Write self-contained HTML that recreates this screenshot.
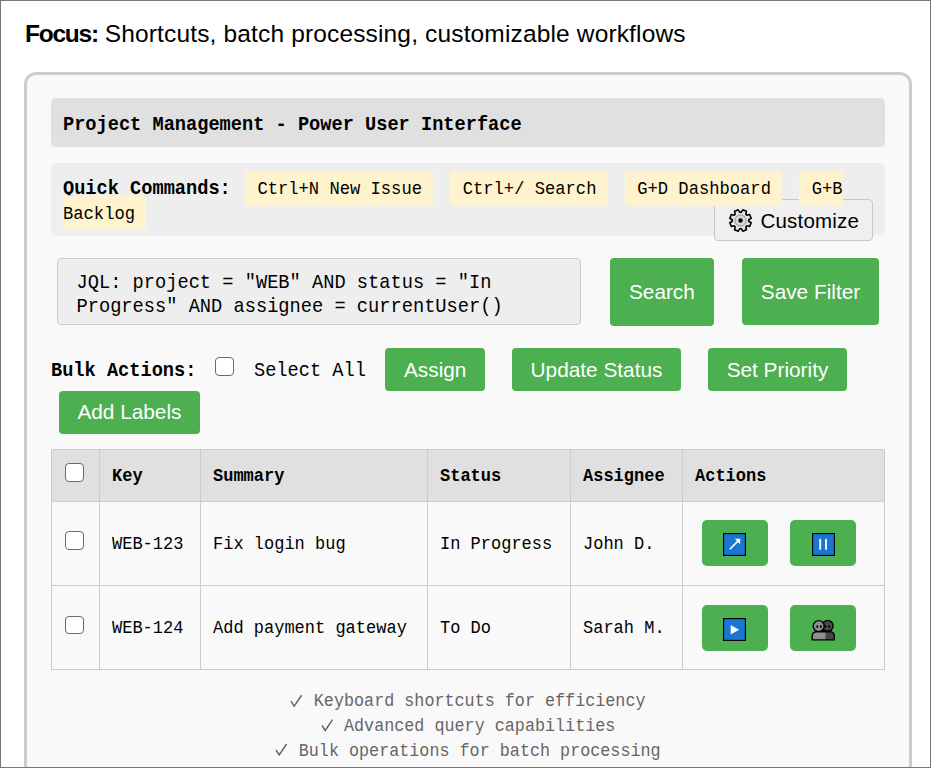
<!DOCTYPE html>
<html><head><meta charset="utf-8">
<style>
*{box-sizing:border-box;}
html,body{margin:0;padding:0;}
body{width:931px;height:768px;overflow:hidden;position:relative;background:#fff;font-family:"Liberation Sans",sans-serif;color:#000;}
.a{position:absolute;white-space:nowrap;}
.frame{position:absolute;left:0;top:0;width:931px;height:768px;border:1px solid #777;z-index:50;}
.h{left:25px;top:17.5px;font-size:24.5px;line-height:32px;letter-spacing:0.15px;}
.h b{letter-spacing:-1.25px;}
.box{position:absolute;left:24px;top:72px;width:888px;height:800px;border:3px solid #ccc;border-radius:12px;background:#f9f9f9;}
.mono{font-family:"Liberation Mono",monospace;}
.title{position:absolute;left:51px;top:98px;width:834px;height:48.6px;background:#e0e0e0;border-radius:5px;}
.tt{left:63px;top:112.5px;font-family:"Liberation Mono",monospace;font-weight:bold;font-size:18.65px;line-height:24px;transform:scaleY(1.06);transform-origin:0 12px;}
.qc{position:absolute;left:51px;top:162.8px;width:834px;height:73px;background:#eee;border-radius:5px;}
.qtx{left:63px;top:177.8px;width:810px;white-space:normal;font-family:"Liberation Mono",monospace;font-size:18.65px;line-height:22.64px;transform:scaleY(1.06);transform-origin:0 11.3px;}
.kbd{background:#fff3cd;padding:8.2px 11.4px 5.6px 12.6px;margin:0 2.8px;font-size:17.15px;border-radius:3px;}
.cust{position:absolute;left:713.5px;top:199.3px;width:159px;height:41.5px;border:1px solid #c8c8c8;border-radius:4px;background:#efefef;font-family:"Liberation Sans",sans-serif;font-size:20.5px;letter-spacing:0.2px;}
.cust span{position:absolute;left:46px;top:9px;line-height:23px;}
.cust svg{position:absolute;left:14px;top:8.5px;}
.jql{position:absolute;left:57.3px;top:258.2px;width:524.2px;height:67.3px;background:#eee;border:1px solid #ccc;border-radius:4px;}
.jt{left:76.5px;top:272px;font-family:"Liberation Mono",monospace;font-size:18.7px;line-height:21.98px;transform:scaleY(1.06);transform-origin:0 11px;}
.btn{position:absolute;background:#4caf50;color:#fff;border-radius:4px;font-family:"Liberation Sans",sans-serif;font-size:20.8px;padding-top:0px;text-align:center;white-space:nowrap;}
.bt{left:51px;top:358.5px;font-family:"Liberation Mono",monospace;font-size:18.65px;line-height:24px;transform:scaleY(1.06);transform-origin:0 12px;}
.cb{position:absolute;width:18.5px;height:18.5px;border:1.6px solid #6a6a6a;border-radius:4px;background:#fff;}
.ln{position:absolute;background:#ccc;}
.hd{position:absolute;left:52px;top:450px;width:832px;height:51px;background:#e0e0e0;}
.th{font-family:"Liberation Mono",monospace;font-weight:bold;font-size:17px;line-height:20px;top:467px;transform:scaleY(1.06);transform-origin:0 10px;}
.td{font-family:"Liberation Mono",monospace;font-size:17px;line-height:20px;transform:scaleY(1.06);transform-origin:0 10px;}
.ab{position:absolute;width:66px;height:46px;background:#4caf50;border-radius:5px;}
.ab svg{position:absolute;left:21px;top:13px;}
.foot{position:absolute;left:51px;width:834px;top:690px;text-align:center;font-family:"Liberation Mono",monospace;font-size:16.75px;line-height:23.3px;color:#666;transform:scaleY(1.06);transform-origin:0 11.65px;}
.ck{display:inline-block;vertical-align:baseline;margin-bottom:-0.5px;}
</style></head><body>
<div class="frame"></div>
<div class="a h"><b>Focus:</b> Shortcuts, batch processing, customizable workflows</div>
<div class="box"></div>
<div class="title"></div>
<div class="a tt">Project Management - Power User Interface</div>
<div class="qc"></div>
<div class="cust"><svg width="23" height="23" viewBox="0 0 23 23"><path d="M10.78 3.23 L12.22 3.23 L13.77 0.84 L17.44 2.36 L16.84 5.14 L17.86 6.16 L20.64 5.56 L22.16 9.23 L19.77 10.78 L19.77 12.22 L22.16 13.77 L20.64 17.44 L17.86 16.84 L16.84 17.86 L17.44 20.64 L13.77 22.16 L12.22 19.77 L10.78 19.77 L9.23 22.16 L5.56 20.64 L6.16 17.86 L5.14 16.84 L2.36 17.44 L0.84 13.77 L3.23 12.22 L3.23 10.78 L0.84 9.23 L2.36 5.56 L5.14 6.16 L6.16 5.14 L5.56 2.36 L9.23 0.84Z" fill="#e4e4e4" stroke="#000" stroke-width="1.6" stroke-linejoin="round"/><circle cx="11.5" cy="11.5" r="5.6" fill="#d8d8d8" stroke="#8a8a8a" stroke-width="0.9"/><circle cx="11.5" cy="11.5" r="2.2" fill="#000"/></svg><span>Customize</span></div>
<div class="a qtx"><b>Quick Commands:</b> <span class="kbd">Ctrl+N New Issue</span> <span class="kbd">Ctrl+/ Search</span> <span class="kbd">G+D Dashboard</span> <span class="kbd">G+B Backlog</span></div>
<div class="jql"></div>
<div class="a jt">JQL: project = "WEB" AND status = "In<br>Progress" AND assignee = currentUser()</div>
<div class="btn" style="left:610px;top:258.2px;width:103.8px;height:67.5px;line-height:67.5px;">Search</div>
<div class="btn" style="left:742.2px;top:258.2px;width:136.6px;height:67.3px;line-height:67.3px;">Save Filter</div>
<div class="a bt"><b>Bulk Actions:</b></div>
<div class="cb" style="left:215.1px;top:357px;"></div>
<div class="a bt" style="left:254px;">Select All</div>
<div class="btn" style="left:385.3px;top:348.1px;width:99.8px;height:43px;line-height:43px;">Assign</div>
<div class="btn" style="left:512.1px;top:348px;width:168.8px;height:43px;line-height:43px;">Update Status</div>
<div class="btn" style="left:708.2px;top:348px;width:138.6px;height:43px;line-height:43px;">Set Priority</div>
<div class="btn" style="left:59.2px;top:391.1px;width:140.5px;height:42.8px;line-height:42.8px;">Add Labels</div>

<div class="hd"></div>
<div class="ln" style="left:51px;top:449px;width:834px;height:1px;"></div>
<div class="ln" style="left:51px;top:501px;width:834px;height:1px;"></div>
<div class="ln" style="left:51px;top:585px;width:834px;height:1px;"></div>
<div class="ln" style="left:51px;top:669px;width:834px;height:1px;"></div>
<div class="ln" style="left:51px;top:449px;width:1px;height:221px;"></div>
<div class="ln" style="left:99px;top:449px;width:1px;height:221px;"></div>
<div class="ln" style="left:200px;top:449px;width:1px;height:221px;"></div>
<div class="ln" style="left:427px;top:449px;width:1px;height:221px;"></div>
<div class="ln" style="left:570px;top:449px;width:1px;height:221px;"></div>
<div class="ln" style="left:682px;top:449px;width:1px;height:221px;"></div>
<div class="ln" style="left:884px;top:449px;width:1px;height:221px;"></div>

<div class="a th" style="left:112px;">Key</div>
<div class="a th" style="left:213px;">Summary</div>
<div class="a th" style="left:440px;">Status</div>
<div class="a th" style="left:583px;">Assignee</div>
<div class="a th" style="left:695px;">Actions</div>

<div class="a td" style="left:112px;top:535px;">WEB-123</div>
<div class="a td" style="left:213px;top:535px;">Fix login bug</div>
<div class="a td" style="left:440px;top:535px;">In Progress</div>
<div class="a td" style="left:583px;top:535px;">John D.</div>
<div class="a td" style="left:112px;top:619px;">WEB-124</div>
<div class="a td" style="left:213px;top:619px;">Add payment gateway</div>
<div class="a td" style="left:440px;top:619px;">To Do</div>
<div class="a td" style="left:583px;top:619px;">Sarah M.</div>

<div class="cb" style="left:65px;top:463px;"></div>
<div class="cb" style="left:65px;top:531px;"></div>
<div class="cb" style="left:65px;top:615.5px;"></div>

<div class="ab" style="left:702px;top:520px;"><svg width="23" height="23" viewBox="0 0 23 23"><rect x="0.5" y="0.5" width="22" height="22" fill="#1a76d2" stroke="#000" stroke-width="1.3"/><path d="M6.8 16.2 L15.6 7.4" stroke="#fff" stroke-width="1.6"/><path d="M17.2 5.8 L17.2 11.2 L11.8 5.8Z" fill="#fff"/></svg></div>
<div class="ab" style="left:790px;top:520px;"><svg style="left:22px;" width="23" height="23" viewBox="0 0 23 23"><rect x="0.5" y="0.5" width="22" height="22" fill="#1a76d2" stroke="#000" stroke-width="1.3"/><rect x="7.3" y="5.9" width="1.8" height="10.8" fill="#fff"/><rect x="13.1" y="5.9" width="1.8" height="10.8" fill="#fff"/></svg></div>
<div class="ab" style="left:702px;top:605px;"><svg width="23" height="23" viewBox="0 0 23 23"><rect x="0.5" y="0.5" width="22" height="22" fill="#1a76d2" stroke="#000" stroke-width="1.3"/><path d="M7.7 6.9 L16.1 11.7 L7.7 16.6Z" fill="#fff"/></svg></div>
<div class="ab" style="left:790px;top:605px;"><svg style="left:20px;top:12px;" width="25" height="25" viewBox="0 0 25 25"><defs><clipPath id="bd"><path d="M2.2 22.9 V19.2 Q2.2 14.9 6.4 14.9 H20.2 Q24.4 14.9 24.4 19.2 V22.9 Z"/></clipPath></defs><path d="M5 12.5 H21.5 V15.5 H5Z" fill="#000"/><circle cx="17.7" cy="8.9" r="5.4" fill="#4a4a4a" stroke="#000" stroke-width="1.4"/><circle cx="8.7" cy="9.1" r="5.5" fill="#8e8e8e" stroke="#000" stroke-width="1.4"/><g clip-path="url(#bd)"><rect x="0" y="14" width="25" height="10" fill="#474747"/><rect x="0" y="14" width="15.5" height="10" fill="#8e8e8e"/></g><path d="M2.2 22.9 V19.2 Q2.2 14.9 6.4 14.9 H20.2 Q24.4 14.9 24.4 19.2 V22.9 Z" fill="none" stroke="#000" stroke-width="1.4"/><ellipse cx="7.3" cy="9.6" rx="1" ry="1.35" fill="#000"/><ellipse cx="10.9" cy="9.6" rx="1" ry="1.35" fill="#000"/><ellipse cx="15.4" cy="9.5" rx="1" ry="1.35" fill="#000"/><ellipse cx="19" cy="9.5" rx="1" ry="1.35" fill="#000"/></svg></div>

<div class="foot"><svg class="ck" width="13.3" height="12" viewBox="0 0 13.3 12"><path d="M1 6.2 L4.2 10.9 L11.6 0.6" fill="none" stroke="#666" stroke-width="1.5"/></svg> Keyboard shortcuts for efficiency<br><svg class="ck" width="13.3" height="12" viewBox="0 0 13.3 12"><path d="M1 6.2 L4.2 10.9 L11.6 0.6" fill="none" stroke="#666" stroke-width="1.5"/></svg> Advanced query capabilities<br><svg class="ck" width="13.3" height="12" viewBox="0 0 13.3 12"><path d="M1 6.2 L4.2 10.9 L11.6 0.6" fill="none" stroke="#666" stroke-width="1.5"/></svg> Bulk operations for batch processing</div>
</body></html>
